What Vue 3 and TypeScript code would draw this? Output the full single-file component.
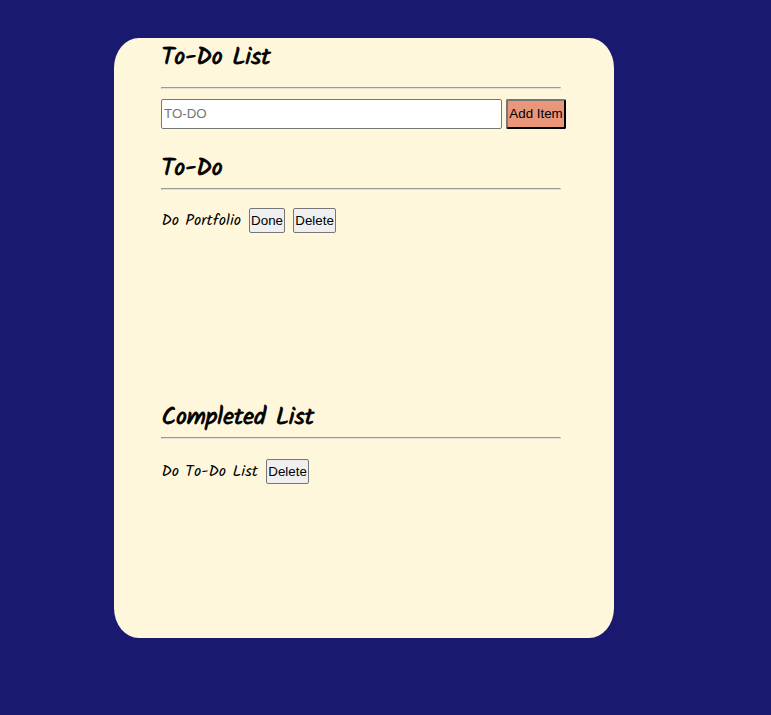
<script setup lang="ts">
import { ref } from 'vue'

const draft = ref<string>('')
const todos = ref<string[]>(['Do Portfolio'])
const completed = ref<string[]>(['Do To-Do List'])

function addItem(): void {
  const text = draft.value.trim()
  if (!text) return
  todos.value.push(text)
  draft.value = ''
}

function finish(index: number): void {
  completed.value.push(...todos.value.splice(index, 1))
}
</script>

<template>
  <main class="panel">
    <h2 class="title main-title">To-Do List</h2>
    <hr />
    <form class="entry" @submit.prevent="addItem">
      <input v-model="draft" type="text" placeholder="TO-DO" />
      <button class="add" type="submit">Add Item</button>
    </form>
    <section class="todo">
      <h2 class="title">To-Do</h2>
      <hr />
      <ul>
        <li v-for="(item, i) in todos" :key="item">
          <span class="item">{{ item }}</span>
          <button class="done" type="button" @click="finish(i)">Done</button>
          <button class="delete" type="button" @click="todos.splice(i, 1)">Delete</button>
        </li>
      </ul>
    </section>
    <section class="completed">
      <h2 class="title">Completed List</h2>
      <hr />
      <ul>
        <li v-for="(item, i) in completed" :key="item">
          <span class="item">{{ item }}</span>
          <button class="delete" type="button" @click="completed.splice(i, 1)">Delete</button>
        </li>
      </ul>
    </section>
  </main>
</template>

<style>
body {
  background: midnightblue;
}
</style>

<style scoped>
.panel {
  box-sizing: border-box;
  width: 500px;
  height: 600px;
  margin: 38px 0 0 114px;
  padding: 0 53px 0 47px;
  border-radius: 5%;
  background: #fff7dc;
  color: #000;
  overflow: hidden;
}
.title {
  margin: 0;
  height: 39px;
  padding-left: 0.5px;
  font: 400 24px/40px Kalam, cursive;
  -webkit-text-stroke: 0.8px #000;
  white-space: nowrap;
}
.main-title {
  height: 49px;
}
hr {
  box-sizing: border-box;
  height: 2px;
  margin: 0;
  border: 1px solid;
  border-color: #9a9a9a #e4e0d2 #e4e0d2 #9a9a9a;
}
.entry {
  display: flex;
  gap: 4px;
  width: 405px;
  margin-top: 10px;
}
input {
  box-sizing: border-box;
  width: 341px;
  height: 30px;
  padding: 0 2px 2px;
  border: 1px solid #767676;
  border-radius: 2px;
  background: #fff;
  font: 13.333px "Liberation Sans", Arial, sans-serif;
}
input::placeholder {
  color: #757575;
}
button {
  box-sizing: border-box;
  flex: none;
  height: 25px;
  padding: 0;
  border: 1px solid #767676;
  border-radius: 2px;
  background: #efefef;
  color: #000;
  font: 13.333px "Liberation Sans", Arial, sans-serif;
}
.done {
  width: 36px;
}
.delete {
  width: 43px;
}
.add {
  width: 60px;
  height: 30px;
  padding: 0 0 2px;
  border: 2px solid;
  border-color: #767676 #000 #000 #767676;
  border-radius: 2px;
  background: darksalmon;
  white-space: nowrap;
}
.todo {
  height: 249px;
  margin-top: 20px;
}
ul {
  margin: 18px 0 0;
  padding: 0;
  list-style: none;
}
.completed ul {
  margin-top: 20px;
}
li {
  display: flex;
  align-items: center;
  gap: 8px;
}
.item {
  padding-left: 0.4px;
  font: 400 16px/25px Kalam, cursive;
  white-space: nowrap;
}
</style>
